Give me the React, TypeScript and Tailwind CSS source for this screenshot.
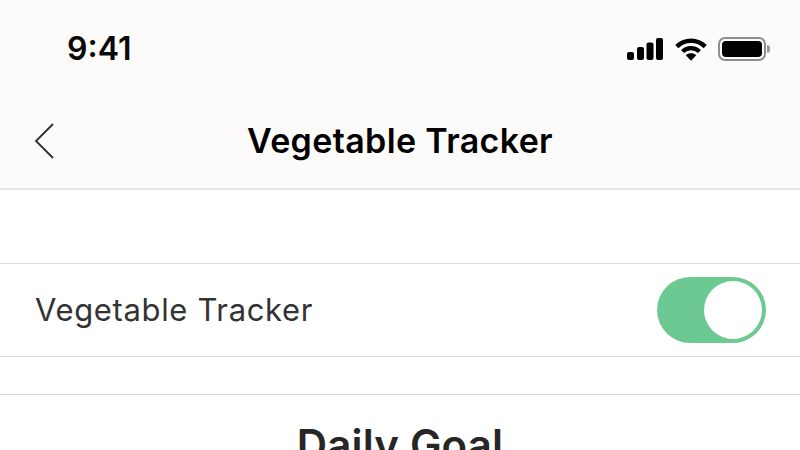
function StatusIcons() {
  return (
    <div className="flex items-center">
      <svg width="36" height="24" viewBox="0 0 36 24" className="fill-black">
        <rect x="0" y="15" width="7" height="8" rx="2" />
        <rect x="10" y="10" width="7" height="13" rx="2" />
        <rect x="19.5" y="5.5" width="7" height="17.5" rx="2" />
        <rect x="29" y="1" width="7" height="22" rx="2" />
      </svg>
      <svg width="32" height="24" viewBox="0 0 32 24" fill="none" className="stroke-black ml-[12px]">
        <path d="M1.8 9.6C9.5 1.8 22.5 1.8 30.2 9.6" strokeWidth="4.4" />
        <path d="M7.6 14.6C12.2 9.9 19.8 9.9 24.4 14.6" strokeWidth="4.2" />
        <path d="M16 23.8L10.8 18.2C13.6 15.6 18.4 15.6 21.2 18.2Z" fill="black" stroke="none" />
      </svg>
      <div className="flex items-center ml-[11px]">
        <div className="w-[48px] h-[24px] rounded-[7px] border-2 border-[#8e8e8e] p-[2px]">
          <div className="w-full h-full rounded-[4px] bg-black" />
        </div>
        <div className="w-[3px] h-[8px] rounded-r-full bg-[#9a9a9a] ml-[1px]" />
      </div>
    </div>
  )
}

export default function App() {
  return (
    <div className="w-[800px] h-[450px] overflow-hidden bg-white font-['Inter','Liberation_Sans',sans-serif]">
      <div className="h-[190px] bg-[#fdfbf9] border-b-2 border-[#e6e4e1]">
        <div className="h-[94px] pl-[67px] pr-[30px] pt-[28px] flex justify-between items-start">
          <span className="text-[32px] leading-[42px] font-semibold text-[#0a0a0a]">9:41</span>
          <div className="pt-[9px]">
            <StatusIcons />
          </div>
        </div>
        <div className="relative h-[94px] flex items-center justify-center">
          <svg
            width="24"
            height="40"
            viewBox="0 0 24 40"
            fill="none"
            className="absolute left-[33px] top-[27px] stroke-[#2d2d2d]"
          >
            <path d="M20 3L3 20L20 37" strokeWidth="1.8" />
          </svg>
          <h1 className="text-[34px] leading-[44px] font-semibold text-black tracking-[0.35px] mt-[-1px]">
            Vegetable Tracker
          </h1>
        </div>
      </div>

      <div className="h-[73px]" />

      <div className="h-[94px] border-y border-[#dededc] pl-[35px] pr-[34px] flex items-center justify-between">
        <span className="text-[31px] leading-[40px] text-[#333333] tracking-[0.65px]">
          Vegetable Tracker
        </span>
        <div className="w-[109px] h-[66px] rounded-full bg-[#6dc992] flex items-center justify-end pr-[4px]">
          <div className="w-[58px] h-[58px] rounded-full bg-white" />
        </div>
      </div>

      <div className="h-[37px]" />

      <div className="border-t border-[#d9d9d7] pt-[22px] text-center">
        <h2 className="text-[42px] leading-[56px] font-semibold text-[#262626] tracking-[0.2px]">
          Daily Goal
        </h2>
      </div>
    </div>
  )
}
